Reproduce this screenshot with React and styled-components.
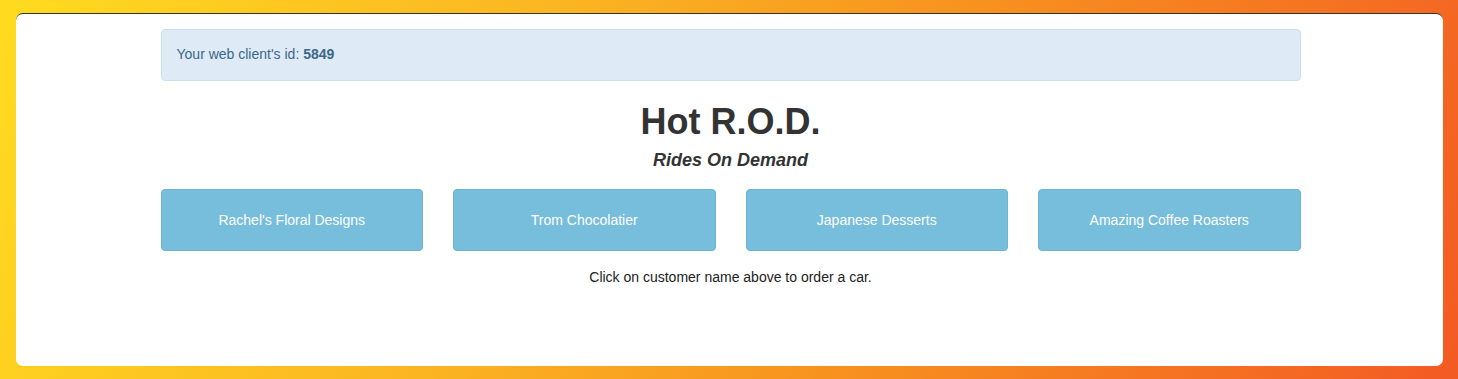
import styled, { createGlobalStyle } from "styled-components";

const GlobalStyle = createGlobalStyle`
  html, body {
    margin: 0;
    padding: 0;
  }

  body {
    background: linear-gradient(112deg, #ffdb1f 0%, #fbb522 35%, #f7901f 62%, #f35a24 100%);
    font-family: "Liberation Sans", Arial, Helvetica, sans-serif;
    font-size: 14px;
    line-height: 1.42857;
    color: #333;
  }
`;

const Page = styled.div`
  height: 379px;
  box-sizing: border-box;
  padding: 13px 15px 13px 16px;
`;

const Card = styled.div`
  height: 100%;
  background: #fff;
  border-radius: 7px;
  border-top: 1px solid #333;
  box-sizing: border-box;
  padding-top: 15px;
`;

const Container = styled.div`
  width: 1140px;
  margin: 0 auto;
  position: relative;
  left: 1px;
`;

const Alert = styled.div`
  background: #deebf6;
  border: 1px solid #c9e1ef;
  border-radius: 4px;
  color: #3c6787;
  height: 52px;
  box-sizing: border-box;
  padding: 0 15px;
  display: flex;
  align-items: center;

  b {
    font-weight: bold;
  }
`;

const Title = styled.h1`
  margin: 21px 0 0;
  font-size: 36px;
  font-weight: bold;
  line-height: 1.1;
  text-align: center;
  color: #333;
`;

const Subtitle = styled.h4`
  margin: 9px 0 0;
  font-size: 18px;
  font-style: italic;
  font-weight: bold;
  line-height: 1.1;
  text-align: center;
  color: #333;
`;

const Customers = styled.div`
  display: grid;
  grid-template-columns: repeat(4, 1fr);
  gap: 30px;
  margin-top: 19px;
`;

const CustomerButton = styled.button`
  height: 62px;
  background: #77bddc;
  border: 1px solid #6cb3d4;
  border-radius: 4px;
  color: #fff;
  font-family: inherit;
  font-size: 14px;
  cursor: pointer;

  &:hover {
    background: #5fb0d4;
  }
`;

const Hint = styled.p`
  margin: 17px 0 0;
  text-align: center;
  color: #222;
`;

const customers = [
  "Rachel's Floral Designs",
  "Trom Chocolatier",
  "Japanese Desserts",
  "Amazing Coffee Roasters",
];

export default function App() {
  return (
    <>
      <GlobalStyle />
      <Page>
        <Card>
          <Container>
            <Alert>
              <span>
                Your web client's id: <b>5849</b>
              </span>
            </Alert>
            <Title>Hot R.O.D.</Title>
            <Subtitle>Rides On Demand</Subtitle>
            <Customers>
              {customers.map((name) => (
                <CustomerButton key={name}>{name}</CustomerButton>
              ))}
            </Customers>
            <Hint>Click on customer name above to order a car.</Hint>
          </Container>
        </Card>
      </Page>
    </>
  );
}
